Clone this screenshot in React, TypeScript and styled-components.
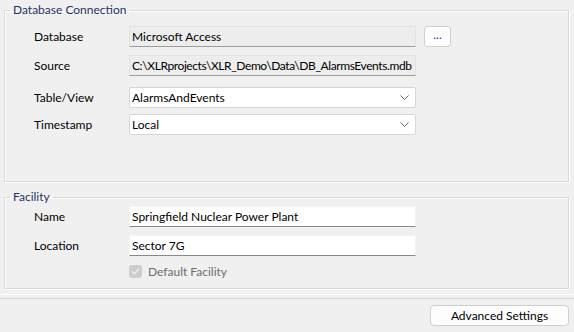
import styled, { createGlobalStyle } from 'styled-components';

const GlobalStyle = createGlobalStyle`
  body {
    margin: 0;
    background: #f0f0f0;
    font-family: Lato, 'Noto Sans', sans-serif;
    font-size: 12px;
    color: #000;
  }
`;

const Window = styled.div`
  width: 574px;
  height: 332px;
  display: flex;
  flex-direction: column;
  overflow: hidden;
`;

const Content = styled.div`
  display: flex;
  flex-direction: column;
  gap: 7px;
  padding: 2px 5px 0 4px;
`;

const GroupBox = styled.fieldset<{ $height: number }>`
  margin: 0;
  padding: 0;
  height: ${(p) => p.$height}px;
  box-sizing: border-box;
  border: 1px solid #d9d9d9;
  box-shadow: inset 1px 1px 0 #fff, 1px 1px 0 #fff;
  min-width: 0;
`;

const Legend = styled.legend`
  margin-left: 5px;
  padding: 0 3px;
  line-height: 16px;
  color: #1f3366;
`;

const GroupBody = styled.div<{ $top: number }>`
  display: flex;
  flex-direction: column;
  padding: ${(p) => p.$top}px 0 0 29px;
`;

const FieldRow = styled.div<{ $mt?: number }>`
  display: grid;
  grid-template-columns: 95px 287px auto;
  align-items: center;
  margin-top: ${(p) => p.$mt ?? 0}px;
`;

const Label = styled.span`
  line-height: 16px;
`;

const TextBox = styled.div<{ $disabled?: boolean; $tight?: boolean }>`
  height: 21px;
  box-sizing: border-box;
  padding: 0 2px;
  display: flex;
  align-items: center;
  white-space: nowrap;
  overflow: hidden;
  letter-spacing: ${(p) => (p.$tight ? '-0.4px' : 'normal')};
  background: ${(p) => (p.$disabled ? '#ededed' : '#fff')};
  border: 1px solid ${(p) => (p.$disabled ? '#e2e2e2' : '#f4f4f4')};
  border-bottom-color: ${(p) => (p.$disabled ? '#9c9c9c' : '#888')};
`;

const Select = styled.div`
  height: 21px;
  box-sizing: border-box;
  padding: 0 6px 0 2px;
  display: flex;
  align-items: center;
  justify-content: space-between;
  background: #fff;
  border: 1px solid #d6d6d6;
  border-radius: 2px;
`;

const BrowseButton = styled.button`
  margin-left: 8px;
  width: 27px;
  height: 21px;
  box-sizing: border-box;
  padding: 0 0 4px;
  background: #fdfdfd;
  border: 1px solid #d0d0d0;
  border-radius: 3px;
  font: inherit;
  color: #3a2a8a;
`;

const CheckRow = styled.label`
  display: flex;
  align-items: center;
  gap: 6px;
  margin: 8px 0 0 95px;
  color: #6d6d6d;
`;

const CheckBox = styled.span`
  width: 13px;
  height: 13px;
  box-sizing: border-box;
  border-radius: 3px;
  background: #cccccc;
  display: flex;
  align-items: center;
  justify-content: center;
`;

const Divider = styled.div`
  margin-top: 5px;
  height: 3px;
  border-top: 1px solid #fff;
  border-bottom: 1px solid #d6d6d6;
`;

const Footer = styled.div`
  display: flex;
  justify-content: flex-end;
  padding: 6px 5px 0 0;
`;

const PushButton = styled.button`
  width: 139px;
  height: 21px;
  box-sizing: border-box;
  padding: 0;
  background: #fdfdfd;
  border: 1px solid #cfcfcf;
  border-radius: 4px;
  font: inherit;
  color: #000;
`;

const Chevron = () => (
  <svg width="9" height="5" viewBox="0 0 9 5">
    <path d="M0.5 0.5 L4.5 4.5 L8.5 0.5" fill="none" stroke="#666" strokeWidth="1" />
  </svg>
);

const Check = () => (
  <svg width="9" height="7" viewBox="0 0 9 7">
    <path d="M1 3.5 L3.5 6 L8 1" fill="none" stroke="#f4f4f4" strokeWidth="1.2" />
  </svg>
);

export default function App() {
  return (
    <Window>
      <GlobalStyle />
      <Content>
        <GroupBox $height={180}>
          <Legend>Database Connection</Legend>
          <GroupBody $top={8}>
            <FieldRow>
              <Label>Database</Label>
              <TextBox $disabled>Microsoft Access</TextBox>
              <BrowseButton>...</BrowseButton>
            </FieldRow>
            <FieldRow $mt={8}>
              <Label>Source</Label>
              <TextBox $disabled $tight>
                C:\XLRprojects\XLR_Demo\Data\DB_AlarmsEvents.mdb
              </TextBox>
            </FieldRow>
            <FieldRow $mt={11}>
              <Label>Table/View</Label>
              <Select>
                AlarmsAndEvents
                <Chevron />
              </Select>
            </FieldRow>
            <FieldRow $mt={6}>
              <Label>Timestamp</Label>
              <Select>
                Local
                <Chevron />
              </Select>
            </FieldRow>
          </GroupBody>
        </GroupBox>
        <GroupBox $height={100}>
          <Legend>Facility</Legend>
          <GroupBody $top={1}>
            <FieldRow>
              <Label>Name</Label>
              <TextBox>Springfield Nuclear Power Plant</TextBox>
            </FieldRow>
            <FieldRow $mt={8}>
              <Label>Location</Label>
              <TextBox>Sector 7G</TextBox>
            </FieldRow>
            <CheckRow>
              <CheckBox>
                <Check />
              </CheckBox>
              Default Facility
            </CheckRow>
          </GroupBody>
        </GroupBox>
      </Content>
      <Divider />
      <Footer>
        <PushButton>Advanced Settings</PushButton>
      </Footer>
    </Window>
  );
}
